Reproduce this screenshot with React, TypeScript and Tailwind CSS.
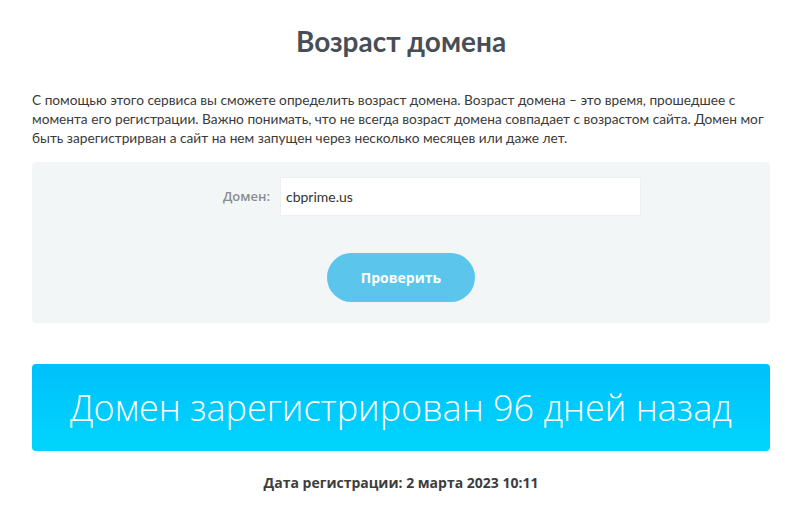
import React from "react";

export default function App() {
  return (
    <div className="min-h-[517px] w-full bg-white">
      <div className="ml-[32px] w-[738px] pt-[24px]">
        <h1 className="text-center font-['Lato',sans-serif] text-[28px] font-bold leading-[34px] text-[#484e55]">
          Возраст домена
        </h1>
        <div className="mt-[32px] font-['Lato',sans-serif] text-[13.7px] leading-[19px] text-[#3a3a3a]">
          <div className="whitespace-nowrap">
            С помощью этого сервиса вы сможете определить возраст домена. Возраст домена – это время, прошедшее с
          </div>
          <div className="whitespace-nowrap">
            момента его регистрации. Важно понимать, что не всегда возраст домена совпадает с возрастом сайта. Домен мог
          </div>
          <div className="whitespace-nowrap">
            быть зарегистрирван а сайт на нем запущен через несколько месяцев или даже лет.
          </div>
        </div>
        <div className="mt-[15px] flex h-[161px] flex-col rounded-[4px] bg-[#f3f6f7] pt-[15px]">
          <div className="flex items-center">
            <span className="w-[238px] text-right font-['Open_Sans',sans-serif] text-[13px] font-semibold text-[#8a8d90]">
              Домен:
            </span>
            <div className="ml-[10px] flex h-[39px] w-[361px] items-center border border-[#edf0f1] bg-white pl-[5px] font-['Lato',sans-serif] text-[14px] text-[#333]">
              cbprime.us
            </div>
          </div>
          <button className="mx-auto mt-[37px] h-[49px] w-[148px] rounded-full bg-[#5bc5ec] font-['Open_Sans',sans-serif] text-[14px] font-bold text-white">
            Проверить
          </button>
        </div>
        <div className="mt-[41px] flex h-[87px] items-center justify-center rounded-[4px] bg-gradient-to-b from-[#00c0fb] to-[#00d5fd]">
          <span className="font-['Open_Sans',sans-serif] text-[36px] font-light text-white">
            Домен зарегистрирован 96 дней назад
          </span>
        </div>
        <div className="mt-[21px] text-center font-['Open_Sans',sans-serif] text-[14px] font-bold text-[#3d3d3d]">
          Дата регистрации: 2 марта 2023 10:11
        </div>
      </div>
    </div>
  );
}
